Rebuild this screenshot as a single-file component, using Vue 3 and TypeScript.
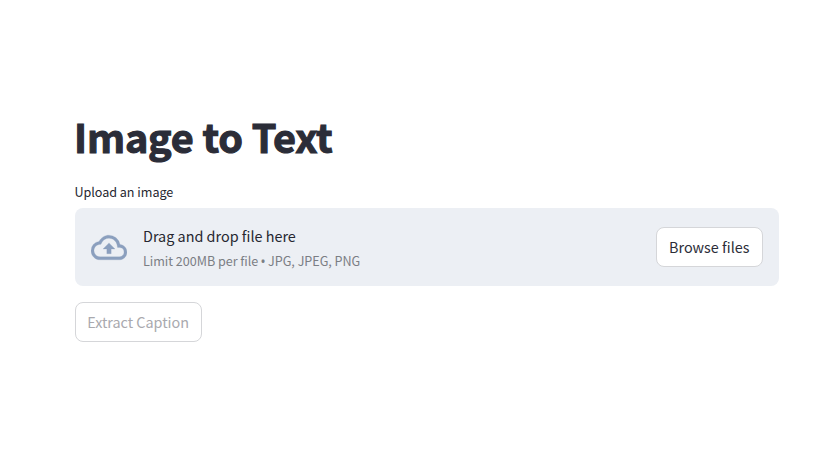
<script setup lang="ts">
const title = 'Image to Text'
const sizeLimit = 'Limit 200MB per file'
const formats = 'JPG, JPEG, PNG'
</script>

<template>
  <main class="page">
    <h1 class="title">{{ title }}</h1>
    <label class="label">Upload an image</label>
    <section class="dropzone">
      <svg class="cloud" viewBox="0 0 24 24" preserveAspectRatio="none" fill="currentColor">
        <path d="M19.35 10.04A7.49 7.49 0 0 0 12 4C9.11 4 6.6 5.64 5.35 8.04A5.994 5.994 0 0 0 0 14c0 3.31 2.69 6 6 6h13c2.76 0 5-2.24 5-5 0-2.64-2.05-4.78-4.65-4.96zM19 18H6c-2.21 0-4-1.79-4-4 0-2.05 1.53-3.76 3.56-3.97l1.07-.11.5-.95A5.469 5.469 0 0 1 12 6c2.62 0 4.88 1.86 5.39 4.43l.3 1.5 1.53.11A2.98 2.98 0 0 1 22 15c0 1.65-1.35 3-3 3zM8 13h2.55v3h2.9v-3H16l-4-4z" stroke="currentColor" stroke-width="0.15" />
      </svg>
      <div class="hints">
        <span class="primary">Drag and drop file here</span>
        <small class="secondary">{{ sizeLimit }} <span class="bullet">•</span> {{ formats }}</small>
      </div>
      <button class="button browse" type="button">Browse files</button>
    </section>
    <button class="button extract" type="button" disabled>Extract Caption</button>
  </main>
</template>

<style>
body { background: #fff; }
</style>

<style scoped>
.page {
  box-sizing: border-box;
  width: 837px;
  height: 458px;
  padding: 109px 58px 0 75px;
  font-family: "Source Sans Pro", "Noto Sans CJK SC", sans-serif;
  font-size: 14.4px;
  color: #262730;
  white-space: nowrap;
}
.title {
  margin: 0 0 0 -1px;
  height: 53px;
  line-height: 53px;
  font-size: 39.6px;
  font-weight: 700;
  letter-spacing: -0.16px;
  color: #2b2d38;
  -webkit-text-stroke: 1.1px #2b2d38;
}
.label { display: block; margin: 20px 0 0 -0.6px; height: 20px; line-height: 20px; font-size: 12.6px; letter-spacing: -0.03px; }
.dropzone {
  box-sizing: border-box;
  display: flex;
  align-items: center;
  margin-top: 6px;
  height: 78px;
  padding: 0 16px;
  background: #eceff4;
  border-radius: 8px;
}
.cloud { width: 36px; height: 37px; flex: none; margin-right: 16px; color: #8b9fbe; }
.hints { display: flex; flex: 1; flex-direction: column; padding-top: 3px; }
.primary { height: 25px; line-height: 24px; }
.secondary { height: 24px; line-height: 24px; font-size: 12.6px; letter-spacing: -0.03px; color: #7b7e84; }
.bullet { display: inline-block; width: 4.2px; font-family: "Noto Sans", sans-serif; font-size: 13.5px; line-height: 1; text-indent: -0.5px; vertical-align: -1px; }
.button {
  box-sizing: border-box;
  height: 40px;
  padding: 0 12px 2px;
  border: 1px solid #d5d6d9;
  border-radius: 8px;
  background: #fff;
  font: inherit;
  color: #2b2d38;
  text-align: left;
}
.browse { width: 107px; }
.extract { display: block; width: 127px; margin-top: 16px; padding-left: 11.2px; letter-spacing: -0.02px; color: #a9a9ae; }
</style>
